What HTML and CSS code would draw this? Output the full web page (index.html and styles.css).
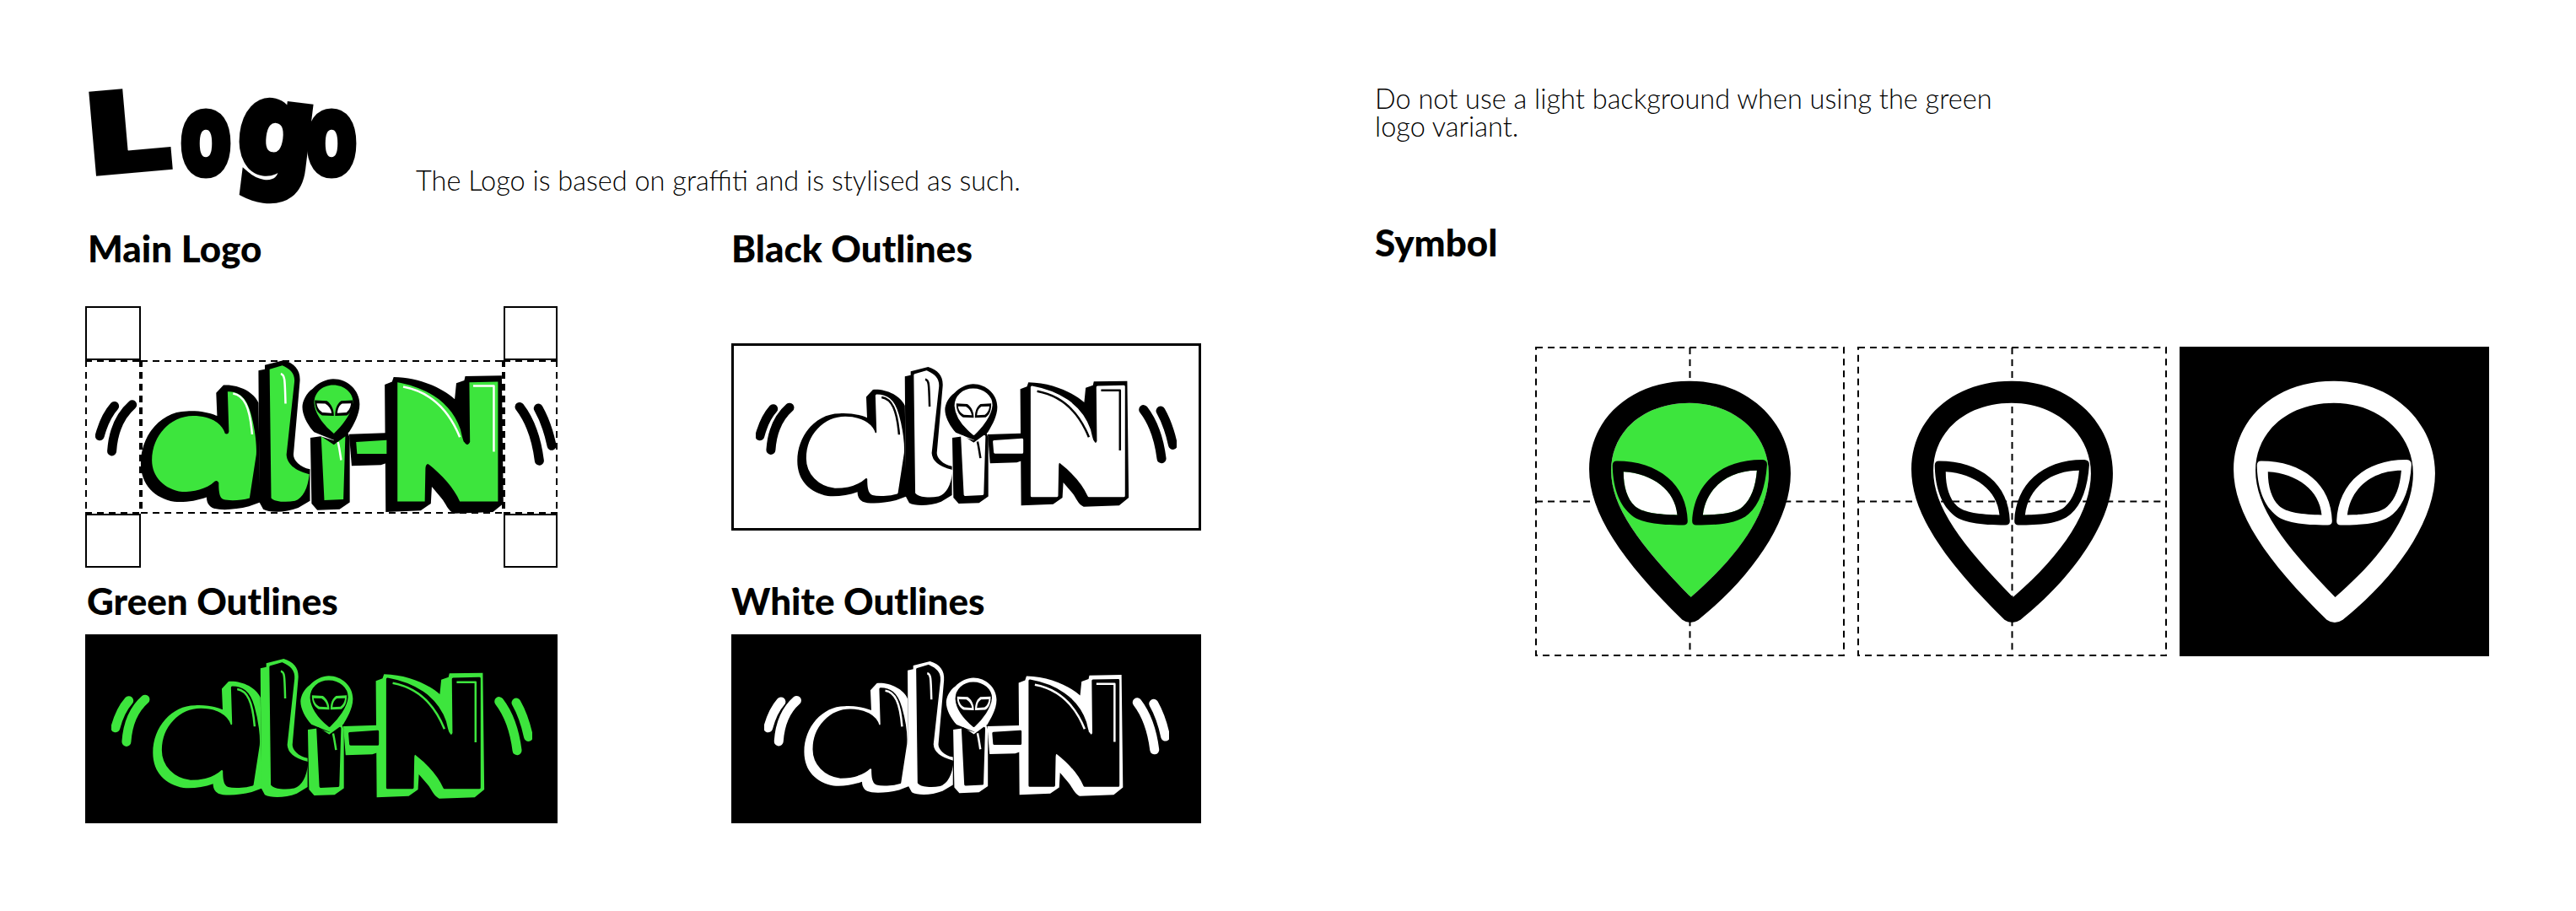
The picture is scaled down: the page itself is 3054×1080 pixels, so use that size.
FILE: index.html
```html
<!DOCTYPE html>
<html lang="en">
   <head>
      <meta charset="UTF-8" />
      <title>Logo</title>
      <link rel="stylesheet" href="styles.css">
   </head>
   <body>
      <svg class="defs" aria-hidden="true">
         <symbol id="wordmark" viewBox="62 233 1448 548" preserveAspectRatio="none">
            <path class="ink-line" d="M122 397C100 425 85 465 76 503"/>
            <path class="ink-line" d="M178 392C140 430 118 490 114 558"/>
            <path class="ink-line" d="M1396 400C1430 450 1450 520 1458 592"/>
            <path class="ink-line" d="M1455 405C1475 445 1488 490 1497 538"/>
            <path class="ink" d="M205 600C205 500 270 415 350 415C390 413 420 420 445 432L442 350L465 322C510 318 560 345 575 385L580 740L545 755C500 768 450 770 430 760C415 750 412 735 412 722C380 735 340 742 310 738C250 725 205 680 205 600Z"/>
            <path class="ink" d="M575 285L575 270L595 265L595 250L655 233C690 245 708 270 705 310L685 570C685 590 705 615 737 622L737 735L700 760C660 778 610 778 590 765L578 740Z"/>
            <path class="ink" d="M738 510L770 505L812 520L855 488L862 510L862 740L830 765L760 768L742 745Z"/>
            <path class="ink" d="M860 497L975 493L977 600L960 607L868 610Z"/>
            <path class="ink" d="M972 320L995 310L1000 293C1080 295 1150 330 1192 372L1197 315L1222 305L1225 290L1340 288L1345 745L1312 775L1190 780C1170 770 1165 745 1150 725L1120 685L1117 745L1085 770L975 775Z"/>
            <path class="ink" d="M810 300C855 300 893 340 893 390C893 430 870 470 860 490L815 520L750 490C730 465 713 430 713 400C713 380 725 350 745 335C765 312 790 300 810 300Z"/>
            <path class="face" d="M240 590C240 500 300 432 370 432C420 432 460 455 470 495Q480 500 482 488L478 345C510 345 535 360 550 420C565 480 570 540 568 570L547 725C520 735 480 735 465 730C450 725 450 690 450 670Q445 660 438 665C410 695 370 703 335 703C280 695 240 650 240 590Z"/>
            <path class="face" d="M610 265L650 252C675 265 690 280 688 310L663 570C665 610 700 630 735 640C730 690 715 725 690 735C660 742 625 738 615 725Z"/>
            <path class="face" d="M772 505L812 535L848 505L842 730L782 733Z"/>
            <path class="face" d="M882 525L978 518L978 567L885 567Z"/>
            <path class="face" d="M1012 312C1100 330 1180 380 1210 480Q1220 530 1222 525Q1232 545 1240 525L1238 312L1328 310L1328 737L1208 737C1190 690 1150 640 1108 603Q1100 605 1100 620L1098 737L1012 737Z"/>
            <path class="face" d="M810 322C845 322 872 350 872 382C870 420 840 465 812 495C780 465 752 425 750 385C750 350 775 322 810 322Z"/>
            <path class="ink" d="M752 376L790 378C805 390 812 410 812 432L775 430C758 420 752 400 752 376Z"/>
            <path class="ink" d="M872 376L835 378C820 390 816 410 816 432L853 430C868 420 872 400 872 376Z"/>
            <path class="eye" d="M758 387L785 388C797 396 803 408 805 422L778 420C765 412 760 402 758 387Z"/>
            <path class="eye" d="M866 387L838 388C827 396 824 408 823 422L850 420C860 412 864 402 866 387Z"/>
            <path class="shine" d="M495 352C530 358 548 400 555 498"/>
            <path class="shine" d="M645 282C658 284 658 300 660 388"/>
            <path class="shine" d="M825 525C830 550 832 570 835 590"/>
            <path class="shine" d="M1030 328C1110 345 1170 400 1208 508"/>
            <path class="shine" d="M1250 325L1315 325L1315 560"/>
         </symbol>

         <symbol id="alien" viewBox="32 30 1100 1100">
            <path class="head" d="M580 230C420 230 302 330 302 470C302 600 400 730 585 920C770 760 862 610 862 480C862 340 740 230 580 230Z"/>
            <path class="eye" d="M346 474C450 480 530 540 537 628C470 626 410 620 385 595C360 570 346 530 346 474Z"/>
            <path class="eye" d="M820 470C720 470 640 530 628 628C690 626 745 622 770 598C800 570 815 530 820 470Z"/>
            <path class="ink" fill-rule="evenodd" d="M583 152C370 150 224 290 224 465C224 620 340 790 555 1000Q583 1020 612 1000C800 850 940 650 940 480C940 300 790 152 583 152ZM580 230C420 230 302 330 302 470C302 600 400 730 585 920C770 760 862 610 862 480C862 340 740 230 580 230Z"/>
            <path class="ink" fill-rule="evenodd" d="M322 436C470 436 572 520 574 650Q574 664 558 664C470 664 400 655 370 625C325 585 308 520 307 452Q307 436 322 436ZM346 474C450 480 530 540 537 628C470 626 410 620 385 595C360 570 346 530 346 474Z"/>
            <path class="ink" fill-rule="evenodd" d="M840 432Q857 434 856 450C850 530 830 590 790 625C750 660 680 664 604 664Q590 664 590 650C595 520 690 430 840 432ZM820 470C720 470 640 530 628 628C690 626 745 622 770 598C800 570 815 530 820 470Z"/>
         </symbol>

         <symbol id="guides" viewBox="32 30 1100 1100">
            <path class="guide" d="M35 33H1129V1127H35ZM582 33V1127M35 580H1129"/>
         </symbol>
      </svg>

      <div class="sheet">
         <div class="brand">
            <div class="brand-head">
               <div class="graffiti"><span class="g-l">L</span><span class="g-o">o</span><span class="g-g">g</span><span class="g-o">o</span></div>
               <p class="copy">The Logo is based on graffiti and is stylised as such.</p>
            </div>
            <div class="variants">
               <h2 class="label">Main Logo</h2>
               <h2 class="label label-right">Black Outlines</h2>

               <div class="clear">
                  <div class="corner top-left"></div>
                  <div class="corner top-right"></div>
                  <div class="guide-box side-left"></div>
                  <div class="guide-box side-mid"></div>
                  <div class="guide-box side-right"></div>
                  <svg class="mark mark-main theme-main"><use href="#wordmark"/></svg>
                  <div class="corner bottom-left"></div>
                  <div class="corner bottom-right"></div>
               </div>
               <div class="panel panel-line theme-black">
                  <svg class="mark mark-wide"><use href="#wordmark"/></svg>
               </div>

               <h2 class="label label-low">Green Outlines</h2>
               <h2 class="label label-low label-right">White Outlines</h2>

               <div class="panel panel-dark theme-green">
                  <svg class="mark mark-wide"><use href="#wordmark"/></svg>
               </div>
               <div class="panel panel-dark theme-white">
                  <svg class="mark mark-narrow"><use href="#wordmark"/></svg>
               </div>
            </div>
         </div>

         <div class="symbols">
            <p class="copy note">Do not use a light background when using the green logo variant.</p>
            <h2 class="label symbol-label">Symbol</h2>
            <div class="tiles">
               <svg class="tile theme-main"><use href="#guides"/><use href="#alien"/></svg>
               <svg class="tile theme-outline"><use href="#guides"/><use href="#alien"/></svg>
               <svg class="tile tile-dark theme-inverse"><use href="#alien"/></svg>
            </div>
         </div>
      </div>
   </body>
</html>
```

FILE: styles.css
```css
body {
background-color: #fff;
color: #000;
font-family: "Lato", "Liberation Sans", sans-serif;
margin: 0;
padding: 0;
}
.defs {
display: none;
}
.sheet {
display: grid;
grid-template-columns: 1529px 1fr;
padding-left: 101px;
height: 1080px;
box-sizing: border-box;
overflow: hidden;
}
.brand-head {
display: flex;
align-items: flex-end;
height: 148px;
margin-top: 100px;
}
.graffiti {
display: flex;
flex: none;
width: 392px;
height: 148px;
font-family: "DejaVu Sans", sans-serif;
font-weight: bold;
font-size: 112px;
line-height: 120px;
-webkit-text-stroke: 8px #000;
}
.graffiti span {
display: block;
flex: none;
transform-origin: 0 99px;
}
.g-l {
width: 113px;
transform: translate(4px, 6px) rotate(-5deg) scale(1.38, 1.12);
}
.g-o {
width: 64px;
transform: translateY(6px) scale(0.78, 1.15);
}
.g-g {
width: 85px;
transform: rotate(7deg) scale(1.12, 1.32);
}
.copy {
font-weight: 300;
font-size: 32.5px;
line-height: 33px;
margin: 0;
}
.brand-head .copy {
padding-bottom: 18px;
}
.variants {
display: grid;
grid-template-columns: 560px 557px;
grid-template-rows: 115px 310px 79px 224px;
column-gap: 206px;
align-items: center;
}
.label {
font-weight: 900;
font-size: 44px;
line-height: 60px;
margin: 16px 0 0 3px;
align-self: start;
}
.label-low {
margin-top: 9px;
margin-left: 2px;
}
.label-right {
margin-left: 0;
}
.clear {
display: grid;
grid-template-columns: 66px 430px 64px;
grid-template-rows: 64px 182px 64px;
}
.corner {
border: 2px solid #000;
box-sizing: border-box;
}
.top-left {
grid-area: 1 / 1;
}
.top-right {
grid-area: 1 / 3;
}
.bottom-left {
grid-area: 3 / 1;
}
.bottom-right {
grid-area: 3 / 3;
}
.guide-box {
background-image:
   repeating-linear-gradient(90deg, #000 0 8px, transparent 8px 14px),
   repeating-linear-gradient(90deg, #000 0 8px, transparent 8px 14px),
   repeating-linear-gradient(180deg, #000 0 8px, transparent 8px 14px),
   repeating-linear-gradient(180deg, #000 0 8px, transparent 8px 14px);
background-size: 100% 2px, 100% 2px, 2px 100%, 2px 100%;
background-position: top, bottom, left, right;
background-repeat: no-repeat;
}
.side-left {
grid-area: 2 / 1;
}
.side-mid {
grid-area: 2 / 2;
}
.side-right {
grid-area: 2 / 3;
}
.mark {
display: block;
overflow: visible;
}
.mark-main {
grid-area: 2 / 1 / 3 / 4;
width: 546px;
height: 182px;
margin-left: 12px;
}
.mark-wide {
width: 499px;
height: 166px;
}
.mark-narrow {
width: 480px;
height: 160px;
}
.panel {
display: flex;
justify-content: center;
align-items: center;
box-sizing: border-box;
}
.panel-line {
height: 222px;
border: 3px solid #000;
}
.panel-dark {
height: 224px;
background-color: #000;
}
.note {
width: 760px;
margin-top: 100px;
}
.symbol-label {
margin: 91px 0 0 0;
}
.tiles {
display: flex;
gap: 15px;
margin: 94px 0 0 190px;
}
.tile {
display: block;
width: 367px;
height: 367px;
flex: none;
}
.tile-dark {
background-color: #000;
}

.theme-main {
--ink: #000;
--fill: #3de53d;
--shine: #fff;
--eye: #fff;
--grow: 0;
}
.theme-black {
--ink: #000;
--fill: #fff;
--shine: #000;
--eye: #fff;
--grow: 3px;
}
.theme-green {
--ink: #3de53d;
--fill: #000;
--shine: #3de53d;
--eye: #000;
--grow: 3px;
}
.theme-white {
--ink: #fff;
--fill: #000;
--shine: #fff;
--eye: #000;
--grow: 3px;
}
.theme-outline {
--ink: #000;
--fill: none;
--eye: none;
}
.theme-inverse {
--ink: #fff;
--fill: none;
--eye: none;
}
.ink {
fill: var(--ink);
}
.face {
fill: var(--fill);
stroke: var(--fill);
stroke-width: var(--grow);
stroke-linejoin: round;
vector-effect: non-scaling-stroke;
}
.head {
fill: var(--fill);
}
.eye {
fill: var(--eye);
}
.ink-line {
fill: none;
stroke: var(--ink);
stroke-width: 11px;
stroke-linecap: round;
vector-effect: non-scaling-stroke;
}
.shine {
fill: none;
stroke: var(--shine);
stroke-width: 2.5px;
stroke-linejoin: round;
vector-effect: non-scaling-stroke;
}
.guide {
fill: none;
stroke: #000;
stroke-width: 6;
stroke-dasharray: 24 18;
}
```
